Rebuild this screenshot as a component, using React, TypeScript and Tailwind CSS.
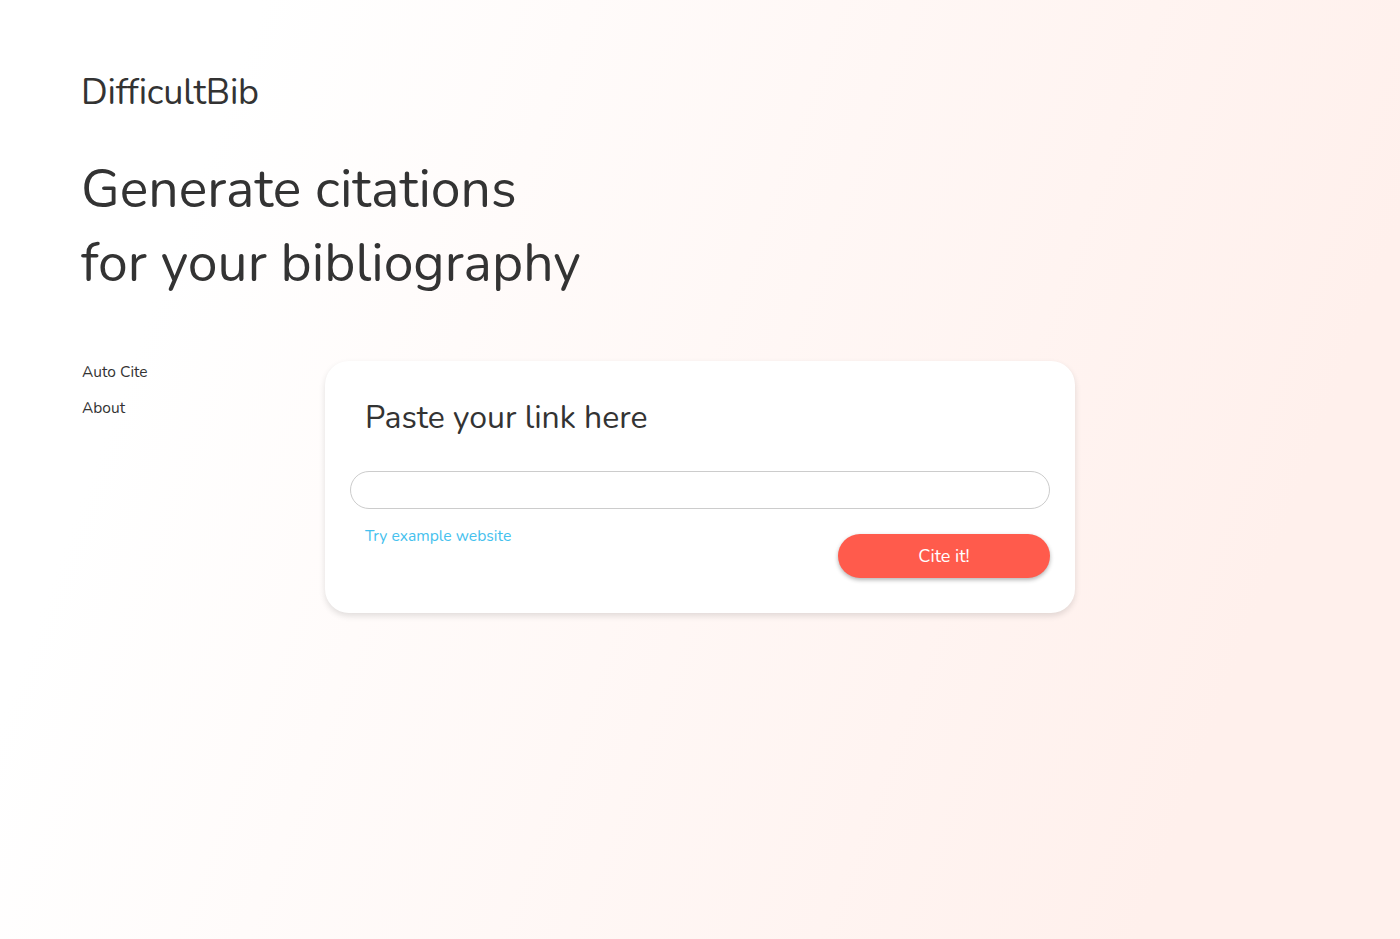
import React from "react";

export default function App() {
  return (
    <div
      className="min-h-screen w-full bg-[linear-gradient(110deg,#ffffff_15%,#fff0ec_85%)] text-[#333333]"
      style={{ fontFamily: '"Nunito", "Lato", "Noto Sans", sans-serif' }}
    >
      <div className="pl-[82px] pt-[69px]">
        <div className="-ml-[1px] text-[36px] leading-[48px] tracking-[-0.2px]">DifficultBib</div>
        <h1 className="-ml-[1px] mt-[36px] text-[53.5px] leading-[74px] font-normal">
          Generate citations
          <br />
          for your bibliography
        </h1>
        <div className="mt-[60px] flex">
          <nav className="flex w-[243px] flex-col gap-[14px] text-[15.5px] leading-[22px]">
            <a className="cursor-pointer">Auto Cite</a>
            <a className="cursor-pointer">About</a>
          </nav>
          <div className="w-[750px] rounded-[24px] bg-white px-[25px] pb-[35px] pt-[37px] shadow-[0_3px_6px_rgba(0,0,0,0.12)]">
            <div className="px-[15px] text-[32px] leading-[40px]">Paste your link here</div>
            <input
              type="text"
              className="mt-[33px] h-[38px] w-full rounded-full border border-[#cccccc] bg-white px-4 outline-none"
            />
            <div className="mt-[16px] flex items-start justify-between">
              <a className="cursor-pointer px-[15px] text-[15.7px] leading-[22px] text-[#45c1ee]">
                Try example website
              </a>
              <button className="mt-[9px] h-[44px] w-[212px] rounded-full bg-[#ff5b4c] text-[18px] text-white shadow-[0_2px_4px_rgba(0,0,0,0.3)]">
                Cite it!
              </button>
            </div>
          </div>
        </div>
      </div>
    </div>
  );
}
